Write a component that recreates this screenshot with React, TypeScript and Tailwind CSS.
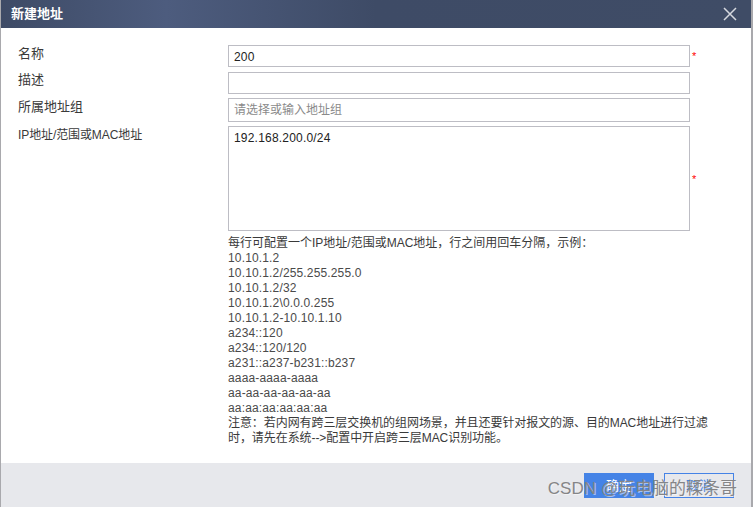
const helpExamples = [
  '10.10.1.2',
  '10.10.1.2/255.255.255.0',
  '10.10.1.2/32',
  '10.10.1.2\\0.0.0.255',
  '10.10.1.2-10.10.1.10',
  'a234::120',
  'a234::120/120',
  'a231::a237-b231::b237',
  'aaaa-aaaa-aaaa',
  'aa-aa-aa-aa-aa-aa',
  'aa:aa:aa:aa:aa:aa',
]

const fontStack = "font-['Liberation_Sans','Noto_Sans_CJK_SC',sans-serif]"

export default function App() {
  return (
    <div className={`flex h-[507px] w-[753px] overflow-hidden bg-[#a9a9ad] pr-0.5 pl-px text-xs text-[#3a3a3a] ${fontStack}`}>
      <div className="flex min-w-0 flex-1 flex-col">
        {/* Title bar */}
        <div className="flex h-7 shrink-0 items-center justify-between bg-[linear-gradient(90deg,#3e4b66_0%,#4d5c7e_22%,#3e4b66_50%,#3f4c66_100%)] pr-[14px] pl-2.5">
          <span className="text-[13px] font-bold text-white">新建地址</span>
          <svg width="14" height="14" viewBox="0 0 14 14" className="text-[#d5d8de]">
            <path d="M1 1l12 12M13 1L1 13" stroke="currentColor" strokeWidth="1.5" fill="none" />
          </svg>
        </div>

        {/* Form */}
        <div className="flex flex-1 flex-col bg-white pt-[17px] pl-[17px]">
          <div className="grid grid-cols-[210px_462px_auto] gap-y-1">
            <label className="text-[13px] leading-[18px]">名称</label>
            <input readOnly value="200" className="mb-px h-[22px] border border-[#bdbdc4] px-[5px] pt-px text-xs tracking-[0.2px] text-[#222] outline-none" />
            <span className="pt-[4px] pl-[2px] text-[11px] leading-[14px] text-[#f00]">*</span>

            <label className="text-[13px] leading-[16px]">描述</label>
            <input readOnly className="h-[22px] border border-[#bdbdc4] px-[5px] text-xs outline-none" />
            <span />

            <label className="text-[13px] leading-[18px]">所属地址组</label>
            <input readOnly placeholder="请选择或输入地址组" className="h-6 border border-[#bdbdc4] px-[5px] text-xs outline-none placeholder:text-[#8a8a8a]" />
            <span />

            <label className="pt-px text-xs leading-[16px] tracking-[-0.1px]">IP地址/范围或MAC地址</label>
            <div className="h-[105px] border border-[#bdbdc4] px-[5px] pt-[4px] text-xs leading-[14px] tracking-[0.2px] text-[#222]">192.168.200.0/24</div>
            <span className="self-center pl-[2px] text-[11px] leading-[14px] text-[#f00]">*</span>
          </div>

          {/* Help text */}
          <div className="mt-[5px] ml-[210px] w-[490px] text-xs leading-[15px] text-[#3a3a3a]">
            <div>每行可配置一个IP地址/范围或MAC地址，行之间用回车分隔，示例：</div>
            {helpExamples.map((line) => (
              <div key={line} className="tracking-[0.15px] text-[#4a4a4a]">{line}</div>
            ))}
            <div className="tracking-[-0.07px]">注意：若内网有跨三层交换机的组网场景，并且还要针对报文的源、目的MAC地址进行过滤时，请先在系统--&gt;配置中开启跨三层MAC识别功能。</div>
          </div>
        </div>

        {/* Footer */}
        <div className="relative flex h-11 shrink-0 items-start justify-end gap-2.5 bg-[#e7e8ec] pt-[10px] pr-[17px]">
          <button className="h-[25px] w-[70px] bg-[#4583e6] text-[13px] text-white">确定</button>
          <button className="h-[25px] w-[70px] border border-[#4583e6] text-[13px] text-[#4583e6]">取消</button>
          <span className="absolute top-4 right-[14px] text-[17px] leading-5 text-[#858587] [text-shadow:1px_1px_0_#ffffff80]">CSDN @玩电脑的糅条哥</span>
        </div>
      </div>
    </div>
  )
}
